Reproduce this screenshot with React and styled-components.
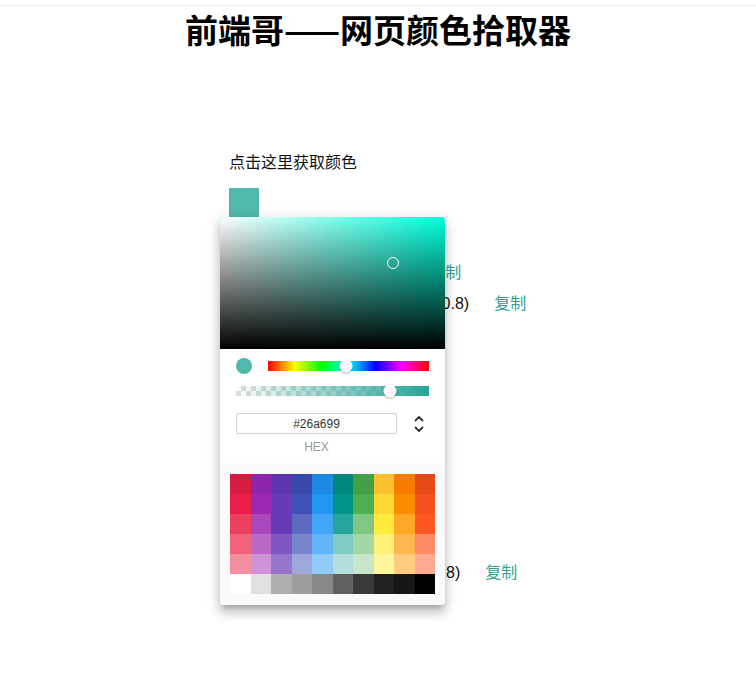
import React from 'react';
import styled, { createGlobalStyle } from 'styled-components';

const GlobalStyle = createGlobalStyle`
  html, body {
    margin: 0;
    padding: 0;
    background: #fff;
  }
  body {
    font-family: "Liberation Sans", "Noto Sans CJK SC", sans-serif;
    color: #222;
  }
`;

const swatchRows = [
  ['#d81b43', '#8e24aa', '#5e35b1', '#3949ab', '#1e88e5', '#00897b', '#43a047', '#fbc02d', '#f57c00', '#e64a19'],
  ['#e91e4b', '#9c27b0', '#673ab7', '#3f51b5', '#2196f3', '#009688', '#4caf50', '#fdd835', '#fb8c00', '#f4511e'],
  ['#ec405c', '#ab47bc', '#673ab7', '#5c6bc0', '#42a5f5', '#26a69a', '#81c784', '#ffeb3b', '#ffa726', '#ff5722'],
  ['#f0627a', '#ba68c8', '#7e57c2', '#7986cb', '#64b5f6', '#80cbc4', '#a5d6a7', '#fff176', '#ffb74d', '#ff8a65'],
  ['#f48fa0', '#ce93d8', '#9575cd', '#9fa8da', '#90caf9', '#b2dfdb', '#c8e6c9', '#fff59d', '#ffcc80', '#ffab91'],
  ['#ffffff', '#e0e0e0', '#b0b0b0', '#9e9e9e', '#888888', '#616161', '#3a3a3a', '#212121', '#171717', '#000000'],
];

const PICKED = '#26a699';

const App = () => {
  return (
    <Page>
      <GlobalStyle />
      <TopRule />
      <Title>前端哥——网页颜色拾取器</Title>

      <Main>
        <Block>
          <Prompt>点击这里获取颜色</Prompt>
          <Swatch />
          <Results>
            <Row>
              <span>HEX颜色值：#26a699cc</span>
              <Copy>复制</Copy>
            </Row>
            <Row>
              <span>RGBA值：rgba(38, 166, 153, 0.8)</span>
              <Copy>复制</Copy>
            </Row>
          </Results>
        </Block>

        <Block>
          <Prompt>点击这里获取颜色</Prompt>
          <Swatch />
          <Results>
            <Row>
              <span>HEX颜色：#26a699cc</span>
              <Copy>复制</Copy>
            </Row>
            <Row>
              <span>RGBA值：rgba(38,166,153, 0.8)</span>
              <Copy>复制</Copy>
            </Row>
          </Results>
        </Block>

        <Picker>
          <Canvas>
            <CanvasThumb />
          </Canvas>
          <Controls>
            <SliderRow>
              <Dot />
              <HueTrack>
                <Thumb style={{ left: '48.4%' }} />
              </HueTrack>
            </SliderRow>
            <SliderRow>
              <AlphaTrack>
                <Thumb style={{ left: '80%' }} />
              </AlphaTrack>
            </SliderRow>
            <EditRow>
              <Field>
                <Input readOnly value={PICKED} />
                <FieldLabel>HEX</FieldLabel>
              </Field>
              <ModeSwitch>
                <svg width="12" height="20" viewBox="0 0 12 20" fill="none" stroke="#333" strokeWidth="1.8" strokeLinecap="round" strokeLinejoin="round">
                  <path d="M2.5 6.5 L6 3 L9.5 6.5" />
                  <path d="M2.5 13.5 L6 17 L9.5 13.5" />
                </svg>
              </ModeSwitch>
            </EditRow>
          </Controls>
          <Swatches>
            {swatchRows.map((row, r) =>
              row.map((c, i) => <Chip key={`${r}-${i}`} $color={c} />)
            )}
          </Swatches>
        </Picker>
      </Main>
    </Page>
  );
};

const Page = styled.div`
  min-height: 687px;
  position: relative;
`;

const TopRule = styled.div`
  height: 5px;
  border-bottom: 1px solid #ededed;
`;

const Title = styled.h1`
  margin: 2px 0 0;
  text-align: center;
  font-family: "Noto Sans CJK SC", sans-serif;
  font-size: 33px;
  line-height: 42px;
  font-weight: 700;
  color: #000;
`;

const Main = styled.main`
  position: relative;
  padding: 0 0 0 229px;
  margin-top: 101px;
`;

const Block = styled.section`
  display: flex;
  flex-direction: column;
  align-items: flex-start;
  margin-bottom: 104px;
`;

const Prompt = styled.div`
  font-size: 16px;
  line-height: 24px;
  color: #111;
`;

const Swatch = styled.div`
  width: 30px;
  height: 30px;
  margin-top: 13px;
  background: rgba(38, 166, 153, 0.8);
`;

const Results = styled.div`
  margin-top: 43px;
  display: flex;
  flex-direction: column;
  gap: 7px;
`;

const Row = styled.div`
  font-size: 16px;
  line-height: 24px;
  color: #111;
  white-space: nowrap;
`;

const Copy = styled.span`
  margin-left: 25px;
  color: #2d9f92;
  cursor: pointer;
`;

const Picker = styled.div`
  position: absolute;
  left: 220px;
  top: 66px;
  width: 225px;
  background: #fff;
  border-radius: 4px;
  overflow: hidden;
  box-shadow: 0 5px 5px -3px rgba(0, 0, 0, 0.2), 0 8px 10px 1px rgba(0, 0, 0, 0.14),
    0 3px 14px 2px rgba(0, 0, 0, 0.12);
`;

const Canvas = styled.div`
  position: relative;
  height: 132px;
  background: linear-gradient(to top, #000, rgba(0, 0, 0, 0)),
    linear-gradient(to right, #fff, rgba(255, 255, 255, 0)), hsl(172, 100%, 50%);
`;

const CanvasThumb = styled.div`
  position: absolute;
  left: 167px;
  top: 40px;
  width: 10px;
  height: 10px;
  border: 1.5px solid #fff;
  border-radius: 50%;
`;

const Controls = styled.div`
  padding: 9px 16px 9px;
`;

const SliderRow = styled.div`
  display: flex;
  align-items: center;
  height: 16px;
  margin-bottom: 9px;
`;

const Dot = styled.div`
  width: 16px;
  height: 16px;
  border-radius: 50%;
  background: rgba(38, 166, 153, 0.8);
  margin-right: 16px;
  flex: none;
`;

const Track = styled.div`
  position: relative;
  flex: 1;
  height: 10px;
`;

const HueTrack = styled(Track)`
  background: linear-gradient(
    to right,
    #f00 0%,
    #ff0 16.66%,
    #0f0 33.33%,
    #0ff 50%,
    #00f 66.66%,
    #f0f 83.33%,
    #f00 100%
  );
`;

const AlphaTrack = styled(Track)`
  background: linear-gradient(to right, rgba(38, 166, 153, 0), rgba(38, 166, 153, 1)),
    repeating-conic-gradient(#dcdcdc 0% 25%, #fff 0% 50%) 0 0 / 10px 10px;
`;

const Thumb = styled.div`
  position: absolute;
  top: 50%;
  width: 13px;
  height: 13px;
  border-radius: 50%;
  background: #fff;
  transform: translate(-50%, -50%);
  box-shadow: 0 1px 3px rgba(0, 0, 0, 0.3);
`;

const EditRow = styled.div`
  display: flex;
  align-items: flex-start;
  margin-top: 14px;
`;

const Field = styled.div`
  flex: 1;
  display: flex;
  flex-direction: column;
  align-items: center;
`;

const Input = styled.input`
  box-sizing: border-box;
  width: 100%;
  height: 21px;
  border: 1px solid #cfcfcf;
  border-radius: 2px;
  padding: 0;
  text-align: center;
  font-family: "Liberation Sans", sans-serif;
  font-size: 12px;
  line-height: 19px;
  color: #333;
  outline: none;
`;

const FieldLabel = styled.div`
  margin-top: 7px;
  font-size: 12px;
  line-height: 12px;
  color: #9a9a9a;
`;

const ModeSwitch = styled.div`
  width: 20px;
  margin-left: 12px;
  height: 21px;
  display: flex;
  align-items: center;
  justify-content: center;
`;

const Swatches = styled.div`
  background: #fafafa;
  margin-top: 1px;
  padding: 11px 10px;
  display: grid;
  grid-template-columns: repeat(10, 1fr);
  grid-auto-rows: 20px;
`;

const Chip = styled.div`
  background: ${p => p.$color};
`;

export default App;
